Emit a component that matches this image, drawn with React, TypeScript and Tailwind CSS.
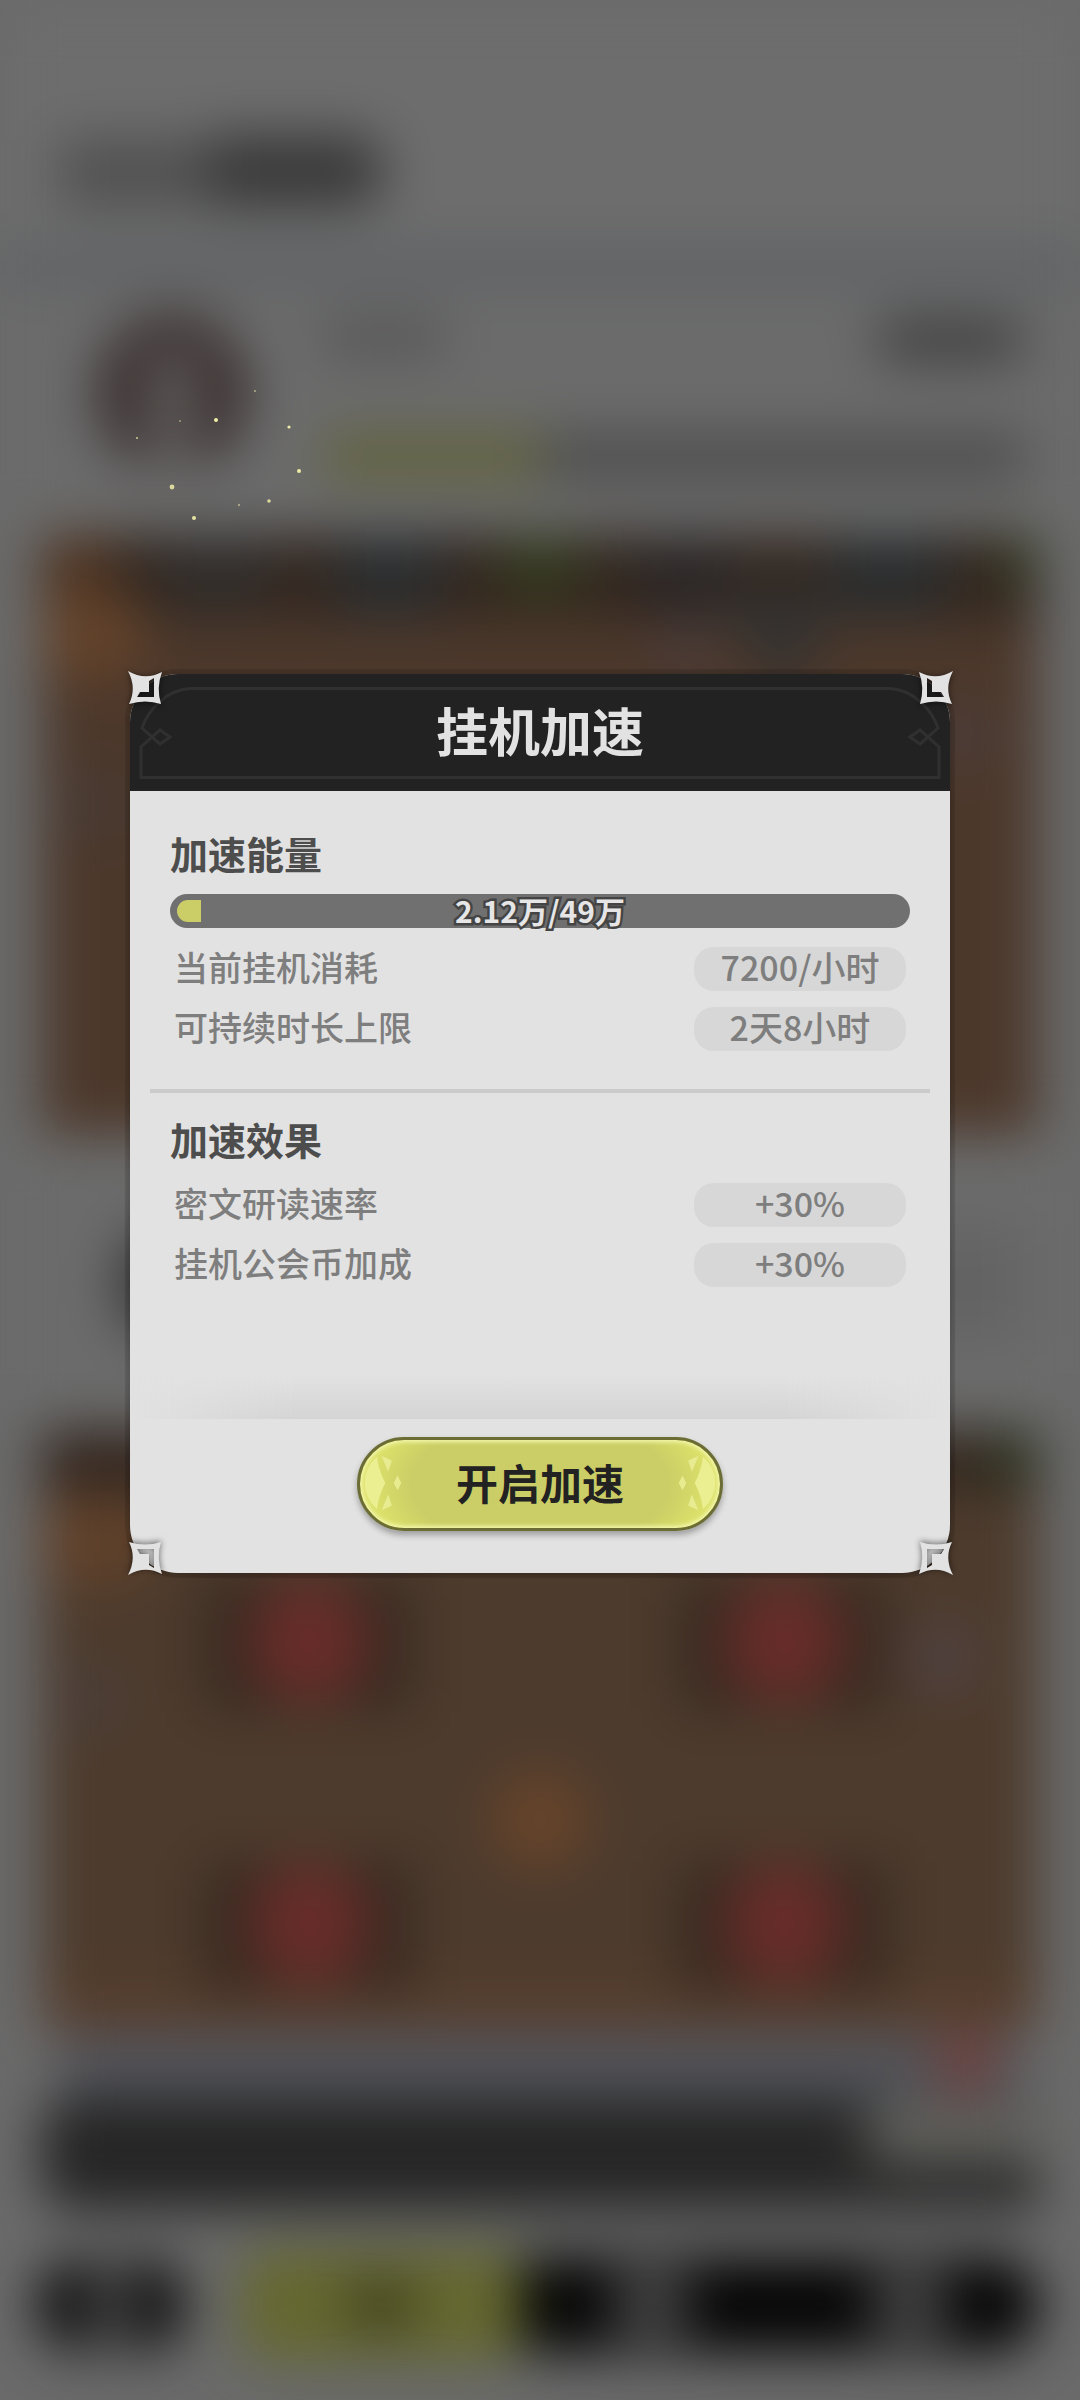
import React from 'react';

type Row = { label: string; value: string };

const energyRows: Row[] = [
  { label: '当前挂机消耗', value: '7200/小时' },
  { label: '可持续时长上限', value: '2天8小时' },
];

const effectRows: Row[] = [
  { label: '密文研读速率', value: '+30%' },
  { label: '挂机公会币加成', value: '+30%' },
];

const sparks = [
  { x: 137, y: 438, r: 1, o: 0.8 },
  { x: 180, y: 421, r: 1, o: 0.5 },
  { x: 216, y: 420, r: 2, o: 1 },
  { x: 255, y: 391, r: 1, o: 0.6 },
  { x: 289, y: 427, r: 1.6, o: 1 },
  { x: 299, y: 471, r: 2, o: 1 },
  { x: 172, y: 487, r: 2.4, o: 0.85 },
  { x: 239, y: 505, r: 1.2, o: 0.5 },
  { x: 269, y: 501, r: 1.8, o: 0.85 },
  { x: 194, y: 518, r: 2, o: 0.95 },
];

function UpperRoom() {
  return (
    <svg viewBox="0 0 990 600" preserveAspectRatio="none" className="block h-[600px] w-full" aria-hidden="true">
      <rect width="990" height="600" fill="#4c382b" />
      <rect width="990" height="84" fill="#33271f" />
      <rect width="70" height="150" fill="#4c3220" />
      <ellipse cx="50" cy="100" rx="56" ry="46" fill="#63432b" />
      <rect x="120" y="0" width="110" height="76" fill="#302c2a" />
      <rect x="290" y="0" width="110" height="84" fill="#2a2c2d" />
      <rect x="455" y="0" width="80" height="62" fill="#32381e" />
      <rect x="590" y="0" width="100" height="80" fill="#2b2625" />
      <rect x="780" y="0" width="120" height="84" fill="#2a2c2d" />
      <rect x="950" y="0" width="40" height="56" fill="#31341f" />
      <path d="M660 60 L800 60 L740 160 Z" fill="#333231" />
      <circle cx="640" cy="112" r="24" fill="#4b3f42" />
      <circle cx="915" cy="200" r="26" fill="#4b3f42" />
      <circle cx="50" cy="270" r="34" fill="#473a34" />
    </svg>
  );
}

function LowerRoom() {
  const tables = [
    [160, 170],
    [632, 170],
    [160, 452],
    [632, 452],
  ];
  return (
    <svg viewBox="0 0 990 600" preserveAspectRatio="none" className="block h-[600px] w-full" aria-hidden="true">
      <rect width="990" height="600" fill="#4d3b2d" />
      <rect width="990" height="60" fill="#33261f" />
      <rect x="935" y="0" width="55" height="60" fill="#2d301f" />
      <ellipse cx="50" cy="110" rx="64" ry="46" fill="#60412a" />
      <rect y="555" width="990" height="45" fill="#573e2d" />
      {tables.map(([x, y]) => (
        <g key={`${x}-${y}`}>
          <rect x={x} y={y - 20} width="210" height="130" fill="#392a21" />
          <ellipse cx={x + 106} cy={y + 42} rx="60" ry="60" fill="#672c29" />
        </g>
      ))}
      <circle cx="495" cy="390" r="48" fill="#67442b" />
      <circle cx="895" cy="228" r="32" fill="#514346" />
      <circle cx="50" cy="270" r="32" fill="#4a3e3a" />
    </svg>
  );
}

function GuildPage() {
  return (
    <div className="min-h-screen overflow-hidden bg-[#6a6a6a]" aria-hidden="true">
      <div className="flex flex-col blur-[26px]">
        <div className="flex h-[245px] items-end bg-[#6d6d6d] px-[60px] pb-[38px]">
          <div className="h-[68px] w-[150px] bg-[#515151]" />
          <div className="h-[72px] w-[175px] rounded-r-full bg-[#393939]" />
        </div>
        <div className="h-[40px] bg-[#606265]" />
        <div className="flex h-[250px] gap-[76px] bg-[#6b6b6b] pr-[55px] pl-[96px]">
          <div className="mt-[28px] flex h-[160px] w-[152px] items-end justify-center rounded-full bg-[#3b3030]">
            <div className="h-[120px] w-[44px] bg-[#62605f]" />
          </div>
          <div className="flex flex-1 flex-col">
            <div className="mt-[32px] flex justify-between">
              <div className="h-[40px] w-[120px] bg-[#575757]" />
              <div className="h-[46px] w-[150px] rounded-full bg-[#424242]" />
            </div>
            <div className="mt-[70px] flex h-[48px]">
              <div className="w-[31%] bg-[#62633f]" />
              <div className="flex-1 bg-[#4e4e4e]" />
            </div>
          </div>
        </div>
        <div className="mx-[42px]">
          <UpperRoom />
        </div>
        <div className="flex h-[295px] items-center bg-[#6b6b6b] pr-[60px] pl-[115px]">
          <div className="h-[120px] flex-1 rounded-full bg-[#3a3a3a]" />
          <div className="h-[110px] w-[140px] bg-[#636363]" />
        </div>
        <div className="mx-[42px]">
          <LowerRoom />
        </div>
        <div className="mx-[60px] flex h-[68px] items-end justify-end bg-[#53545a] pr-[22px]">
          <div className="h-[68px] w-[64px] rounded-full bg-[#6f4443]" />
        </div>
        <div className="mx-[42px] flex h-[112px] justify-end rounded-l-[30px] bg-[#262626]">
          <div className="mt-[4px] h-[62px] w-[175px] rounded-l-full bg-[#61615d]" />
        </div>
        <div className="flex h-[190px] items-center pr-[40px] pl-[36px]">
          <div className="flex h-[94px] w-[150px] justify-center rounded-full bg-[#0f0f0f]">
            <div className="w-[44px] bg-[#444444]" />
          </div>
          <div className="ml-[55px] flex h-[112px] w-[280px] items-center justify-center rounded-[24px] bg-[#656830]">
            <div className="h-[50px] w-[70px] bg-[#43441f]" />
          </div>
          <div className="flex h-[96px] flex-1 items-center justify-around rounded-r-full bg-[#070707]">
            <div className="h-[70px] w-[76px] bg-[#434343]" />
            <div className="h-[70px] w-[76px] bg-[#434343]" />
          </div>
        </div>
      </div>
    </div>
  );
}

function CornerStar({ className }: { className: string }) {
  return (
    <svg viewBox="0 0 34 34" className={`absolute size-[34px] overflow-visible drop-shadow-[0_1px_3px_rgba(0,0,0,0.6)] ${className}`} aria-hidden="true">
      <path
        fill="#e2e2e2"
        fillRule="evenodd"
        d="M0 0 Q17 10 34 1 Q28 17 33 33 Q17 28 1 33 Q9 17 0 0 Z M26 7 L21 10 V21 H12 L9 26 H26 Z"
      />
    </svg>
  );
}

function FrameEnd({ className }: { className: string }) {
  return (
    <svg viewBox="0 0 60 117" className={`h-[117px] w-[60px] shrink-0 ${className}`} fill="none" stroke="#303030" strokeWidth="3" aria-hidden="true">
      <path d="M60 14.5 C36 16 18 36 12 54 L30 70 L40 63 L30 56 L11 73 V103.5 H60" />
    </svg>
  );
}

function ButtonGem({ className }: { className: string }) {
  return (
    <svg viewBox="0 0 60 94" className={`absolute top-0 h-full w-[60px] ${className}`} aria-hidden="true">
      <path d="M16 18 Q3 30 3 46 Q3 62 16 74 Q18 59 25 46 Q18 33 16 18 Z" fill="#ebef92" />
      <path d="M21 17 L32 22 L28 34 Z M28 58 L32 70 L21 75 Z" fill="#e8eb90" />
      <path d="M38 38 L42 46 L38 54 L34 46 Z" fill="#e8eb90" />
    </svg>
  );
}

function StatList({ rows }: { rows: Row[] }) {
  return (
    <dl className="flex flex-col gap-4 px-1 text-[34px] leading-[40px] font-medium text-[#7e7e7e]">
      {rows.map((row) => (
        <div key={row.label} className="flex justify-between">
          <dt className="pb-1">{row.label}</dt>
          <dd className="w-[212px] rounded-[20px] bg-[#d7d7d7] pb-1 text-center">{row.value}</dd>
        </div>
      ))}
    </dl>
  );
}

export default function App() {
  const energyPercent = (2.12 / 49) * 100;

  return (
    <div className="relative min-h-screen overflow-hidden font-['Noto_Sans_CJK_SC',sans-serif]">
      <GuildPage />
      <svg className="absolute top-0 left-0 h-[560px] w-[340px]" aria-hidden="true">
        {sparks.map((s) => (
          <circle key={`${s.x}-${s.y}`} cx={s.x} cy={s.y} r={s.r} fill="#eeeca6" opacity={s.o} />
        ))}
      </svg>

      <div className="absolute inset-0 flex items-center justify-center px-6 pb-[154px]">
        <section
          role="dialog"
          aria-labelledby="boost-title"
          className="relative w-full max-w-[820px] rounded-[48px] bg-[#e2e2e2] shadow-[0_0_0_5px_rgba(0,0,0,0.1),0_1px_6px_rgba(0,0,0,0.2)]"
        >
          <header className="relative flex h-[117px] items-center justify-center rounded-t-[48px] bg-[#222222] pb-1">
            <div className="absolute inset-0 flex">
              <FrameEnd className="" />
              <div className="mt-[13px] h-[92px] flex-1 border-y-3 border-[#303030]" />
              <FrameEnd className="-scale-x-100" />
            </div>
            <h1 id="boost-title" className="relative text-[52px] leading-[60px] font-bold text-[#e2e2e2]">
              挂机加速
            </h1>
          </header>

          <div className="px-10 pt-9">
            <h2 className="pb-1 text-[38px] leading-[52px] font-bold text-[#4d4d4d]">加速能量</h2>
            <div
              role="progressbar"
              aria-label="加速能量"
              aria-valuemin={0}
              aria-valuemax={490000}
              aria-valuenow={21200}
              className="relative mt-[11px] mb-[19px] h-[34px] rounded-full bg-[#707070] px-[7px] py-[6px]"
            >
              <div className="h-full min-w-6 rounded-l-full bg-[#cbce66]" style={{ width: `${energyPercent / 2}%` }} />
              <span className="absolute inset-0 text-center text-[30px] leading-[32px] font-bold text-[#e6e6e6] [-webkit-text-stroke:5px_#444444] [paint-order:stroke_fill]">
                2.12万/49万
              </span>
            </div>
            <StatList rows={energyRows} />
          </div>

          <hr className="mx-5 mt-[38px] mb-5 border-0 border-t-4 border-[#cbcbcb]" />

          <div className="px-10">
            <h2 className="mb-[14px] pb-1 text-[38px] leading-[52px] font-bold text-[#4d4d4d]">加速效果</h2>
            <StatList rows={effectRows} />
          </div>

          <div className="mt-[88px] h-[44px] bg-linear-to-b from-[#e2e2e2] to-[#d4d4d4] [mask-image:linear-gradient(to_right,transparent,black_20%,black_80%,transparent)]" />

          <footer className="flex justify-center pt-[18px] pb-[42px]">
            <button
              type="button"
              className="relative h-[94px] w-[366px] overflow-hidden rounded-full border-3 border-[#6b6d35] bg-[radial-gradient(ellipse_55%_120%_at_center,#cbce66_0%,#cbce66_65%,#dbe06a_85%,#e2e670_100%)] pb-1 text-[42px] leading-[56px] font-bold text-[#222222] shadow-[0_4px_6px_rgba(0,0,0,0.3),inset_0_0_4px_2px_#f6f8b0]"
            >
              <ButtonGem className="left-0" />
              <ButtonGem className="right-0 -scale-x-100" />
              开启加速
            </button>
          </footer>

          <CornerStar className="-top-[3px] -left-0.5" />
          <CornerStar className="-top-[3px] -right-[3px] -scale-x-100" />
          <CornerStar className="-bottom-0.5 -left-0.5 -scale-y-100" />
          <CornerStar className="-right-[3px] -bottom-0.5 -scale-100" />
        </section>
      </div>
    </div>
  );
}
